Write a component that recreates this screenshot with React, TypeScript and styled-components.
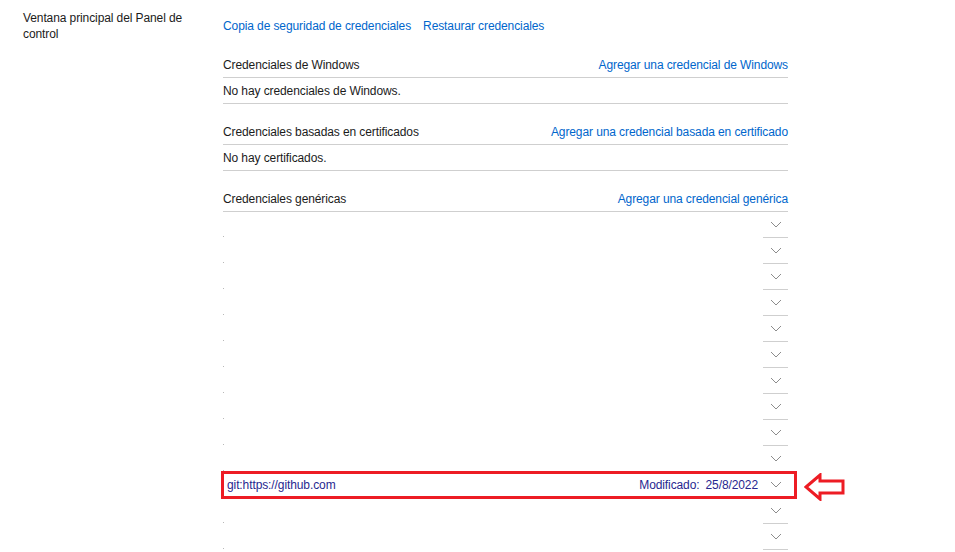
import React from 'react';
import styled, { createGlobalStyle } from 'styled-components';

const GlobalStyle = createGlobalStyle`
  body {
    margin: 0;
    background: #ffffff;
    font-family: 'Liberation Sans', Arial, sans-serif;
    font-size: 12px;
    letter-spacing: -0.1px;
    color: #1b1b1b;
  }
`;

const Page = styled.div`
  display: flex;
  width: 955px;
  height: 552px;
  overflow: hidden;
`;

const Sidebar = styled.nav`
  flex: 0 0 223px;
  box-sizing: border-box;
  padding: 10px 40px 0 23px;
  line-height: 16px;
  color: #1b1b1b;
`;

const Main = styled.main`
  flex: 0 0 565px;
  display: flex;
  flex-direction: column;
`;

const TopLinks = styled.div`
  display: flex;
  gap: 12px;
  height: 26px;
  align-items: center;
  margin-top: 13px;
  margin-bottom: 13px;
`;

const Link = styled.a`
  color: #0066cc;
  text-decoration: none;
  cursor: pointer;
`;

const Section = styled.section`
  margin-bottom: 15px;
`;

const HeaderRow = styled.div`
  display: flex;
  justify-content: space-between;
  align-items: center;
  height: 25px;
  border-bottom: 1px solid #cfcfcf;
`;

const BodyRow = styled.div`
  display: flex;
  align-items: center;
  height: 25px;
  border-bottom: 1px solid #cfcfcf;
`;

const List = styled.div`
  display: flex;
  flex-direction: column;
`;

const Item = styled.div`
  position: relative;
  display: flex;
  align-items: center;
  height: 26px;
`;

const ItemMain = styled.div<{ $filled?: boolean }>`
  flex: 1;
  height: 100%;
  display: flex;
  align-items: center;
  justify-content: space-between;
  box-sizing: border-box;
  padding: 0 5px 0 4px;
  color: #27278f;
  border-bottom: 1px solid ${(p) => (p.$filled ? '#d6d6d6' : 'transparent')};
  position: relative;

  &::after {
    content: '';
    display: ${(p) => (p.$filled ? 'none' : 'block')};
    position: absolute;
    left: 0;
    bottom: 0;
    width: 1px;
    height: 1px;
    background: #b8b8b8;
  }
`;

const Modified = styled.span`
  display: flex;
  gap: 6px;
`;

const Toggle = styled.div`
  width: 25px;
  height: 100%;
  box-sizing: border-box;
  display: flex;
  align-items: center;
  justify-content: center;
  border-bottom: 1px solid #cfcfcf;
`;

const Highlight = styled.div`
  position: absolute;
  left: -2px;
  right: -9px;
  top: -1px;
  bottom: -1px;
  border: 3px solid #ed1c24;
  pointer-events: none;
`;

const Pointer = styled.svg`
  position: absolute;
  right: -58px;
  top: 1px;
`;

const Chevron = () => (
  <svg width="12" height="7" viewBox="0 0 12 7">
    <path d="M1 1 L6 6 L11 1" fill="none" stroke="#8c8c8c" strokeWidth="1" />
  </svg>
);

const ROWS = 13;
const GIT_ROW = 10;

export default function App() {
  return (
    <>
      <GlobalStyle />
      <Page>
        <Sidebar>Ventana principal del Panel de control</Sidebar>
        <Main>
          <TopLinks>
            <Link>Copia de seguridad de credenciales</Link>
            <Link>Restaurar credenciales</Link>
          </TopLinks>

          <Section>
            <HeaderRow>
              <span>Credenciales de Windows</span>
              <Link>Agregar una credencial de Windows</Link>
            </HeaderRow>
            <BodyRow>No hay credenciales de Windows.</BodyRow>
          </Section>

          <Section>
            <HeaderRow>
              <span>Credenciales basadas en certificados</span>
              <Link>Agregar una credencial basada en certificado</Link>
            </HeaderRow>
            <BodyRow>No hay certificados.</BodyRow>
          </Section>

          <HeaderRow>
            <span>Credenciales genéricas</span>
            <Link>Agregar una credencial genérica</Link>
          </HeaderRow>
          <List>
            {Array.from({ length: ROWS }).map((_, i) =>
              i === GIT_ROW ? (
                <Item key={i}>
                  <ItemMain $filled>
                    <span>git:https://github.com</span>
                    <Modified>
                      <span>Modificado:</span>
                      <span>25/8/2022</span>
                    </Modified>
                  </ItemMain>
                  <Toggle>
                    <Chevron />
                  </Toggle>
                  <Highlight />
                  <Pointer width="42" height="28" viewBox="0 0 42 28">
                    <polygon
                      points="2,14 16,2 16,8 39,8 39,20 16,20 16,26"
                      fill="none"
                      stroke="#ed1c24"
                      strokeWidth="3"
                      strokeLinejoin="miter"
                    />
                  </Pointer>
                </Item>
              ) : (
                <Item key={i}>
                  <ItemMain />
                  <Toggle>
                    <Chevron />
                  </Toggle>
                </Item>
              )
            )}
          </List>
        </Main>
      </Page>
    </>
  );
}
